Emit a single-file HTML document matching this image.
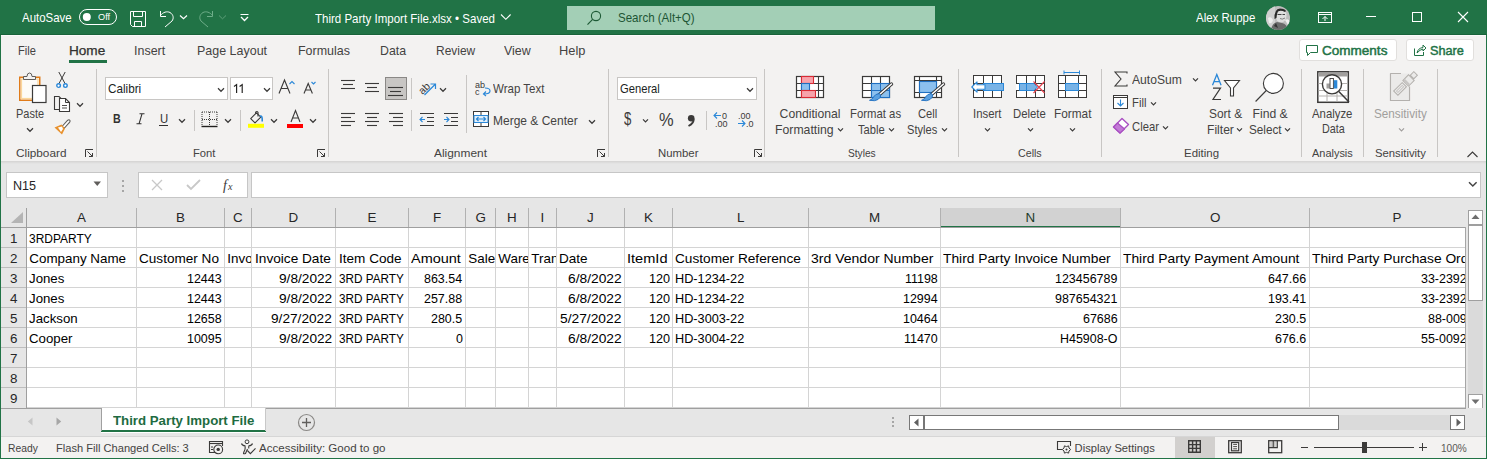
<!DOCTYPE html>
<html><head><meta charset="utf-8"><style>
html,body{margin:0;padding:0;}
body{width:1487px;height:459px;position:relative;overflow:hidden;background:#f3f2f1;font-family:"Liberation Sans",sans-serif;}
.t{position:absolute;white-space:nowrap;transform-origin:0 0;font-family:"Liberation Sans",sans-serif;}
svg{overflow:visible}
</style></head><body>
<div style="position:absolute;left:0px;top:0px;width:1487px;height:35px;background:#217346"></div>
<div style="position:absolute;left:0px;top:34px;width:1487px;height:1px;background:#19633a"></div>
<div style="position:absolute;left:0px;top:35px;width:1487px;height:126px;background:#f3f2f1"></div>
<div style="position:absolute;left:1px;top:35px;width:1485px;height:1px;background:#fbfafa"></div>
<div style="position:absolute;left:0px;top:161px;width:1487px;height:247px;background:#e6e6e6"></div>
<div style="position:absolute;left:0px;top:161px;width:1487px;height:3px;background:linear-gradient(#d4d3d2,#e6e6e6)"></div>
<span class="t" style="left:22.10px;top:11.63px;font-size:12.2px;line-height:12.2px;font-weight:normal;font-style:normal;color:#ffffff;transform:scaleX(0.9396);">AutoSave</span>
<svg style="position:absolute;left:79px;top:9px;" width="38" height="16" viewBox="0 0 38 16"><rect x="0.5" y="0.5" width="37" height="15" rx="7.5" fill="none" stroke="#fff" stroke-width="1"/><circle cx="7.8" cy="8" r="4" fill="#fff"/></svg>
<span class="t" style="left:98.00px;top:12.88px;font-size:9.2px;line-height:9.2px;font-weight:normal;font-style:normal;color:#ffffff;">Off</span>
<svg style="position:absolute;left:129px;top:10px;" width="18" height="18" viewBox="0 0 18 18"><path d="M1.5 1.5 H16.5 V16.5 H3.5 L1.5 14.5 Z" fill="none" stroke="#fff" stroke-width="1"/><path d="M4.5 1.5 V6.5 H13.5 V1.5" fill="none" stroke="#fff"/><path d="M5.5 16.5 V11.5 H12.5 V16.5" fill="none" stroke="#fff"/></svg>
<svg style="position:absolute;left:158px;top:10px;" width="18" height="18" viewBox="0 0 18 18"><path d="M2.5 1 V6.5 H8" fill="none" stroke="#fff" stroke-width="1"/><path d="M2.3 5.8 C5 2 9 1 12 2.5 C15.5 4.5 16 8.5 14 11 L7 17" fill="none" stroke="#fff" stroke-width="1"/></svg>
<svg style="position:absolute;left:179px;top:14px;" width="9" height="6" viewBox="0 0 9 6"><path d="M1 1.5 L4.5 4.8 L8 1.5" fill="none" stroke="#fff" stroke-width="1.2"/></svg>
<svg style="position:absolute;left:197px;top:10px;" width="18" height="18" viewBox="0 0 18 18"><path d="M15.5 1 V6.5 H10" fill="none" stroke="#6fae8a" stroke-width="1"/><path d="M15.7 5.8 C13 2 9 1 6 2.5 C2.5 4.5 2 8.5 4 11 L11 17" fill="none" stroke="#6fae8a" stroke-width="1"/></svg>
<svg style="position:absolute;left:218px;top:14px;" width="9" height="6" viewBox="0 0 9 6"><path d="M1 1.5 L4.5 4.8 L8 1.5" fill="none" stroke="#5d9f79" stroke-width="1"/></svg>
<svg style="position:absolute;left:240px;top:13px;" width="10" height="10" viewBox="0 0 10 10"><path d="M0.5 1.5 H8.5" stroke="#fff" stroke-width="1"/><path d="M1 4 L4.5 7.5 L8 4" fill="none" stroke="#fff" stroke-width="1.3"/></svg>
<span class="t" style="left:314.60px;top:12.63px;font-size:12.2px;line-height:12.2px;font-weight:normal;font-style:normal;color:#ffffff;transform:scaleX(0.9445);">Third Party Import File.xlsx • Saved</span>
<svg style="position:absolute;left:500px;top:13px;" width="12" height="8" viewBox="0 0 12 8"><path d="M1 1.5 L5.8 6.3 L10.6 1.5" fill="none" stroke="#fff" stroke-width="1.1"/></svg>
<div style="position:absolute;left:567px;top:6px;width:368px;height:24px;background:#a3cfb6"></div>
<svg style="position:absolute;left:585px;top:10px;" width="18" height="18" viewBox="0 0 18 18"><circle cx="11" cy="6" r="4.6" fill="none" stroke="#1e5a36" stroke-width="1.1"/><path d="M7.6 9.4 L2.5 14.6" stroke="#1e5a36" stroke-width="1.2"/></svg>
<span class="t" style="left:617.60px;top:11.63px;font-size:12.2px;line-height:12.2px;font-weight:normal;font-style:normal;color:#1d5534;transform:scaleX(0.9469);">Search (Alt+Q)</span>
<span class="t" style="left:1195.50px;top:12.23px;font-size:12.2px;line-height:12.2px;font-weight:normal;font-style:normal;color:#ffffff;transform:scaleX(0.9413);">Alex Ruppe</span>
<div style="position:absolute;left:1266px;top:6px;width:24px;height:24px;border-radius:50%;overflow:hidden">
<svg style="position:absolute;left:0px;top:0px;" width="24" height="24" viewBox="0 0 24 24"><g><rect width="24" height="24" fill="#bdbdbd"/><rect x="0" y="0" width="9" height="24" fill="#d0d0d0"/><ellipse cx="15" cy="9.5" rx="5.5" ry="7" fill="#dedede"/><path d="M8.5 13 Q8 3 14 2.5 Q19 2.5 20 5 L19 6 Q15 4 12 5.5 Q10.5 8 10.5 12 Z" fill="#2a2a2a"/><path d="M11.5 8.5 H15.5 M16.5 8.5 H19" stroke="#444" stroke-width="1"/><path d="M14 12.5 Q16 14 19 12" stroke="#666" stroke-width="0.8" fill="none"/><path d="M5 24 Q6 17 11 16 L16 17 Q21 18 22 24 Z" fill="#6a6a6a"/><path d="M2 12 Q5 10 7 14 Q6 18 3 17 Z" fill="#eeeeee"/><path d="M19 14 Q23 12 24 16 L22 19 Z" fill="#f0f0f0"/><path d="M8 20 L10 17 L12 22 Z" fill="#333"/></g></svg>
</div>
<svg style="position:absolute;left:1317px;top:11px;" width="16" height="12" viewBox="0 0 16 12"><rect x="1.5" y="1.5" width="13" height="10" fill="none" stroke="#fff"/><path d="M1.5 3.5 H14.5" stroke="#fff"/><path d="M8 10 V5.5 M5.5 8 L8 5.5 L10.5 8" fill="none" stroke="#fff"/></svg>
<div style="position:absolute;left:1366px;top:16px;width:10px;height:1px;background:#fff"></div>
<svg style="position:absolute;left:1411px;top:11px;" width="12" height="12" viewBox="0 0 12 12"><rect x="1.5" y="1.5" width="9" height="9" fill="none" stroke="#fff"/></svg>
<svg style="position:absolute;left:1457px;top:11px;" width="12" height="12" viewBox="0 0 12 12"><path d="M1 1 L11 11 M11 1 L1 11" stroke="#fff" stroke-width="1.1"/></svg>
<span class="t" style="left:18.00px;top:44.83px;font-size:12.2px;line-height:12.2px;font-weight:normal;font-style:normal;color:#444342;transform:scaleX(0.9100);">File</span>
<span class="t" style="left:69.00px;top:44.83px;font-size:12.2px;line-height:12.2px;font-weight:normal;font-style:normal;color:#323130;transform:scaleX(1.1152);-webkit-text-stroke:0.25px #323130;">Home</span>
<div style="position:absolute;left:69px;top:60px;width:38px;height:3px;background:#217346"></div>
<span class="t" style="left:134.00px;top:44.83px;font-size:12.2px;line-height:12.2px;font-weight:normal;font-style:normal;color:#444342;transform:scaleX(1.0226);">Insert</span>
<span class="t" style="left:197.20px;top:44.83px;font-size:12.2px;line-height:12.2px;font-weight:normal;font-style:normal;color:#444342;transform:scaleX(1.0232);">Page Layout</span>
<span class="t" style="left:298.30px;top:44.83px;font-size:12.2px;line-height:12.2px;font-weight:normal;font-style:normal;color:#444342;transform:scaleX(1.0235);">Formulas</span>
<span class="t" style="left:380.00px;top:44.83px;font-size:12.2px;line-height:12.2px;font-weight:normal;font-style:normal;color:#444342;transform:scaleX(1.0115);">Data</span>
<span class="t" style="left:436.30px;top:44.83px;font-size:12.2px;line-height:12.2px;font-weight:normal;font-style:normal;color:#444342;transform:scaleX(0.9800);">Review</span>
<span class="t" style="left:504.30px;top:44.83px;font-size:12.2px;line-height:12.2px;font-weight:normal;font-style:normal;color:#444342;transform:scaleX(1.0192);">View</span>
<span class="t" style="left:559.30px;top:44.83px;font-size:12.2px;line-height:12.2px;font-weight:normal;font-style:normal;color:#444342;transform:scaleX(1.0520);">Help</span>
<div style="position:absolute;left:1299px;top:39px;width:98px;height:22px;background:#fff;border:1px solid #e1dfdd;border-radius:3px;box-sizing:border-box"></div>
<svg style="position:absolute;left:1305px;top:44px;" width="14" height="13" viewBox="0 0 14 13"><path d="M1.5 1.5 H12.5 V8.5 H5.5 L2.5 11.5 V8.5 H1.5 Z" fill="none" stroke="#217346" stroke-width="1"/></svg>
<span class="t" style="left:1322.00px;top:45.06px;font-size:12.4px;line-height:12.4px;font-weight:normal;font-style:normal;color:#217346;transform:scaleX(1.0917);-webkit-text-stroke:0.45px #217346;">Comments</span>
<div style="position:absolute;left:1406px;top:39px;width:68px;height:22px;background:#fff;border:1px solid #e1dfdd;border-radius:3px;box-sizing:border-box"></div>
<svg style="position:absolute;left:1413px;top:43px;" width="14" height="14" viewBox="0 0 14 14"><path d="M1.5 5.5 V12.5 H10.5 V9" fill="none" stroke="#217346"/><path d="M4 10 Q5 5 10 4.5 V2 L13 5 L10 8 V6 Q7 6.5 4 10Z" fill="none" stroke="#217346"/></svg>
<span class="t" style="left:1430.00px;top:45.06px;font-size:12.4px;line-height:12.4px;font-weight:normal;font-style:normal;color:#217346;transform:scaleX(1.0242);-webkit-text-stroke:0.45px #217346;">Share</span>
<div style="position:absolute;left:96px;top:69px;width:1px;height:88px;background:#c8c6c4"></div>
<div style="position:absolute;left:328px;top:69px;width:1px;height:88px;background:#c8c6c4"></div>
<div style="position:absolute;left:608px;top:69px;width:1px;height:88px;background:#c8c6c4"></div>
<div style="position:absolute;left:764px;top:69px;width:1px;height:88px;background:#c8c6c4"></div>
<div style="position:absolute;left:958px;top:69px;width:1px;height:88px;background:#c8c6c4"></div>
<div style="position:absolute;left:1101px;top:69px;width:1px;height:88px;background:#c8c6c4"></div>
<div style="position:absolute;left:1301px;top:69px;width:1px;height:88px;background:#c8c6c4"></div>
<div style="position:absolute;left:1363px;top:69px;width:1px;height:88px;background:#c8c6c4"></div>
<div style="position:absolute;left:1437px;top:69px;width:1px;height:88px;background:#c8c6c4"></div>
<div style="position:absolute;left:194px;top:110px;width:1px;height:21px;background:#c8c6c4"></div>
<div style="position:absolute;left:240px;top:110px;width:1px;height:21px;background:#c8c6c4"></div>
<div style="position:absolute;left:411px;top:78px;width:1px;height:21px;background:#c8c6c4"></div>
<div style="position:absolute;left:411px;top:110px;width:1px;height:21px;background:#c8c6c4"></div>
<div style="position:absolute;left:466px;top:75px;width:1px;height:58px;background:#c8c6c4"></div>
<div style="position:absolute;left:706px;top:111px;width:1px;height:19px;background:#c8c6c4"></div>
<svg style="position:absolute;left:18px;top:71px;" width="30" height="33" viewBox="0 0 30 33"><rect x="1.75" y="6.25" width="20" height="23" fill="#fdfbf8" stroke="#e07b1a" stroke-width="1.5"/><rect x="3.5" y="8" width="16.5" height="19.5" fill="none" stroke="#fbd79c" stroke-width="1.2"/><path d="M5.5 8.5 V5.5 H9 Q9 2 11.5 2 Q14 2 14 5.5 H17.5 V8.5 Z" fill="#f3f2f1" stroke="#605e5c"/><rect x="14.5" y="14.5" width="13.5" height="17" fill="#fff" stroke="#3b3a39" stroke-width="1.2"/></svg>
<span class="t" style="left:16.30px;top:107.93px;font-size:12.2px;line-height:12.2px;font-weight:normal;font-style:normal;color:#444342;transform:scaleX(0.9000);">Paste</span>
<svg style="position:absolute;left:25.8px;top:126.7px;" width="8" height="6.4" viewBox="0 0 8 6.4"><path d="M1 1.3 L4.0 4.300000000000001 L7 1.3" fill="none" stroke="#3b3a39" stroke-width="1.2"/></svg>
<svg style="position:absolute;left:56px;top:71px;" width="12" height="18" viewBox="0 0 12 18"><path d="M2.8 1 L9 12.5 M9.2 1 L3 12.5" stroke="#3b3a39" stroke-width="1"/><circle cx="2.6" cy="14.6" r="1.8" fill="#fff" stroke="#2b88d8" stroke-width="1.4"/><circle cx="9.4" cy="14.6" r="1.8" fill="#fff" stroke="#2b88d8" stroke-width="1.4"/></svg>
<svg style="position:absolute;left:53px;top:95px;" width="18" height="18" viewBox="0 0 18 18"><path d="M6.5 14.5 H1.5 V1.5 H6 L8.5 4" fill="none" stroke="#3b3a39" stroke-width="1.1"/><path d="M6.5 3.5 H12.5 L16.5 7.5 V16.5 H6.5 Z" fill="#fff" stroke="#3b3a39" stroke-width="1.1"/><path d="M12.5 3.5 V7.5 H16.5" fill="none" stroke="#3b3a39"/><path d="M9 10.5 H14 M9 13 H14" stroke="#3b3a39" stroke-width="0.9"/></svg>
<svg style="position:absolute;left:76px;top:102px;" width="8" height="6.4" viewBox="0 0 8 6.4"><path d="M1 1.3 L4.0 4.300000000000001 L7 1.3" fill="none" stroke="#3b3a39" stroke-width="1.2"/></svg>
<svg style="position:absolute;left:53px;top:118px;" width="18" height="18" viewBox="0 0 18 18"><path d="M9 8.5 L14.5 2.5 Q16 1 17 2.5 Q17.5 3.5 16 5 L11 10.5 Z" fill="#fff" stroke="#605e5c" stroke-width="1.1"/><path d="M1.5 9.5 L8.5 6.5 L12 10.5 L9 16.5 Z" fill="#e8912d"/><path d="M5 9.5 L9 8.5 L10 11 L8 14 Z" fill="#fff"/></svg>
<span class="t" style="left:15.50px;top:148.40px;font-size:11.3px;line-height:11.3px;font-weight:normal;font-style:normal;color:#444342;transform:scaleX(1.0437);">Clipboard</span>
<svg style="position:absolute;left:85px;top:149px;" width="9" height="9" viewBox="0 0 9 9"><path d="M0.5 8 V0.5 H8" fill="none" stroke="#3b3a39"/><path d="M2.5 2.5 L7.5 7.5 M4 7.5 H7.5 V4" fill="none" stroke="#3b3a39"/></svg>
<div style="position:absolute;left:105px;top:77px;width:123px;height:23px;background:#fff;border:1px solid #c8c6c4;box-sizing:border-box"></div>
<span class="t" style="left:108.40px;top:82.73px;font-size:12.2px;line-height:12.2px;font-weight:normal;font-style:normal;color:#201f1e;transform:scaleX(0.9600);">Calibri</span>
<svg style="position:absolute;left:217px;top:87px;" width="8" height="6.4" viewBox="0 0 8 6.4"><path d="M1 1.3 L4.0 4.300000000000001 L7 1.3" fill="none" stroke="#3b3a39" stroke-width="1.2"/></svg>
<div style="position:absolute;left:230px;top:77px;width:43px;height:23px;background:#fff;border:1px solid #c8c6c4;box-sizing:border-box"></div>
<svg style="position:absolute;left:233px;top:84px;" width="12" height="10" viewBox="0 0 12 10"><path d="M1 2.5 L3.6 0.6 V9 M6.6 2.5 L9.2 0.6 V9" fill="none" stroke="#201f1e" stroke-width="1.15"/></svg>
<svg style="position:absolute;left:262.5px;top:87px;" width="8" height="6.4" viewBox="0 0 8 6.4"><path d="M1 1.3 L4.0 4.300000000000001 L7 1.3" fill="none" stroke="#3b3a39" stroke-width="1.2"/></svg>
<svg style="position:absolute;left:278px;top:79px;" width="18" height="16" viewBox="0 0 18 16"><path d="M1 14.5 L6.5 1 L12 14.5 M3 9.5 H10" fill="none" stroke="#3b3a39" stroke-width="1.1"/><path d="M11.5 5 L14 2.5 L16.5 5" fill="none" stroke="#2b88d8" stroke-width="1.1"/></svg>
<svg style="position:absolute;left:303px;top:81px;" width="14" height="14" viewBox="0 0 14 14"><path d="M1 12.5 L5.2 2.5 L9.4 12.5 M2.6 9 H7.8" fill="none" stroke="#3b3a39" stroke-width="1.1"/><path d="M8.5 1 L10.5 3 L12.5 1" fill="none" stroke="#2b88d8" stroke-width="1.1"/></svg>
<span class="t" style="left:112.50px;top:113.38px;font-size:12.5px;line-height:12.5px;font-weight:bold;font-style:normal;color:#323130;transform:scaleX(0.8556);">B</span>
<svg style="position:absolute;left:136px;top:113px;" width="9" height="12" viewBox="0 0 9 12"><path d="M3.5 0.8 H8.5 M0.5 10.8 H5.5 M6 0.8 L3 10.8" fill="none" stroke="#323130" stroke-width="1.1"/></svg>
<span class="t" style="left:159.50px;top:113.30px;font-size:12px;line-height:12px;font-weight:normal;font-style:normal;color:#323130;transform:scaleX(0.9444);">U</span>
<div style="position:absolute;left:159px;top:125px;width:9px;height:1px;background:#323130"></div>
<svg style="position:absolute;left:177.6px;top:118px;" width="8" height="6.4" viewBox="0 0 8 6.4"><path d="M1 1.3 L4.0 4.300000000000001 L7 1.3" fill="none" stroke="#3b3a39" stroke-width="1.2"/></svg>
<svg style="position:absolute;left:201px;top:111px;" width="17" height="17" viewBox="0 0 17 17"><path d="M1 1 H16 M1 8.5 H16 M1 1 V15 M8.5 1 V15 M16 1 V15" fill="none" stroke="#3b3a39" stroke-width="1" stroke-dasharray="1 1"/><path d="M0.5 15.5 H16.5" stroke="#201f1e" stroke-width="1.4"/></svg>
<svg style="position:absolute;left:223.6px;top:118px;" width="8" height="6.4" viewBox="0 0 8 6.4"><path d="M1 1.3 L4.0 4.300000000000001 L7 1.3" fill="none" stroke="#3b3a39" stroke-width="1.2"/></svg>
<svg style="position:absolute;left:247px;top:106px;" width="18" height="23" viewBox="0 0 18 23"><path d="M3.7 12.6 L8 16.9 L13.8 11.1 L9.5 6.8 Z" fill="none" stroke="#3b3a39" stroke-width="1.1" stroke-linejoin="round"/><path d="M8.6 7.8 V6.2 Q10 4.8 11 6.2 V10.5" fill="none" stroke="#3b3a39" stroke-width="1.1"/><path d="M12.8 10.2 Q15.6 9 15.2 15.5" fill="none" stroke="#2b88d8" stroke-width="1.6"/><rect x="1" y="17.8" width="16" height="4" fill="#ffff00"/></svg>
<svg style="position:absolute;left:269.8px;top:118px;" width="8" height="6.4" viewBox="0 0 8 6.4"><path d="M1 1.3 L4.0 4.300000000000001 L7 1.3" fill="none" stroke="#3b3a39" stroke-width="1.2"/></svg>
<svg style="position:absolute;left:286px;top:108px;" width="18" height="21" viewBox="0 0 18 21"><path d="M5 14 L9.5 2.5 L14 14 M6.5 10 H12.5" fill="none" stroke="#3b3a39" stroke-width="1.1"/><rect x="1" y="16" width="16" height="4" fill="#ff0000"/></svg>
<svg style="position:absolute;left:308.6px;top:118px;" width="8" height="6.4" viewBox="0 0 8 6.4"><path d="M1 1.3 L4.0 4.300000000000001 L7 1.3" fill="none" stroke="#3b3a39" stroke-width="1.2"/></svg>
<span class="t" style="left:193.00px;top:147.90px;font-size:11.3px;line-height:11.3px;font-weight:normal;font-style:normal;color:#444342;transform:scaleX(0.9913);">Font</span>
<svg style="position:absolute;left:317px;top:149px;" width="9" height="9" viewBox="0 0 9 9"><path d="M0.5 8 V0.5 H8" fill="none" stroke="#3b3a39"/><path d="M2.5 2.5 L7.5 7.5 M4 7.5 H7.5 V4" fill="none" stroke="#3b3a39"/></svg>
<svg style="position:absolute;left:340px;top:0px;" width="20" height="160" viewBox="0 0 20 160"><path d="M1 80.5 H15" stroke="#3b3a39" stroke-width="1.1"/><path d="M3 84.5 H13" stroke="#3b3a39" stroke-width="1.1"/><path d="M1 88.5 H15" stroke="#3b3a39" stroke-width="1.1"/></svg>
<svg style="position:absolute;left:364px;top:0px;" width="20" height="160" viewBox="0 0 20 160"><path d="M1 83.5 H15" stroke="#3b3a39" stroke-width="1.1"/><path d="M3 87.5 H13" stroke="#3b3a39" stroke-width="1.1"/><path d="M1 91.5 H15" stroke="#3b3a39" stroke-width="1.1"/></svg>
<div style="position:absolute;left:385px;top:77px;width:22px;height:23px;background:#c8c6c4;border:1px solid #8a8886;box-sizing:border-box"></div>
<svg style="position:absolute;left:387px;top:0px;" width="20" height="160" viewBox="0 0 20 160"><path d="M1 87.5 H16" stroke="#3b3a39" stroke-width="1.1"/><path d="M3 91.5 H14" stroke="#3b3a39" stroke-width="1.1"/><path d="M1 95.5 H16" stroke="#3b3a39" stroke-width="1.1"/></svg>
<svg style="position:absolute;left:340px;top:0px;" width="20" height="160" viewBox="0 0 20 160"><path d="M1 113.5 H15" stroke="#3b3a39" stroke-width="1.1"/><path d="M1 117.5 H11" stroke="#3b3a39" stroke-width="1.1"/><path d="M1 121.5 H15" stroke="#3b3a39" stroke-width="1.1"/><path d="M1 125.5 H11" stroke="#3b3a39" stroke-width="1.1"/></svg>
<svg style="position:absolute;left:364px;top:0px;" width="20" height="160" viewBox="0 0 20 160"><path d="M1 113.5 H15" stroke="#3b3a39" stroke-width="1.1"/><path d="M3 117.5 H13" stroke="#3b3a39" stroke-width="1.1"/><path d="M1 121.5 H15" stroke="#3b3a39" stroke-width="1.1"/><path d="M3 125.5 H13" stroke="#3b3a39" stroke-width="1.1"/></svg>
<svg style="position:absolute;left:388px;top:0px;" width="20" height="160" viewBox="0 0 20 160"><path d="M1 113.5 H15" stroke="#3b3a39" stroke-width="1.1"/><path d="M5 117.5 H15" stroke="#3b3a39" stroke-width="1.1"/><path d="M1 121.5 H15" stroke="#3b3a39" stroke-width="1.1"/><path d="M5 125.5 H15" stroke="#3b3a39" stroke-width="1.1"/></svg>
<svg style="position:absolute;left:417px;top:78px;" width="22" height="20" viewBox="0 0 22 20"><text x="1" y="14" font-family="Liberation Sans" font-size="10.5" fill="#3b3a39" transform="rotate(-45 7 10)">ab</text><path d="M7.5 17 L18 6.5 M13.5 6 H18.5 V11" fill="none" stroke="#2b88d8" stroke-width="1.2"/></svg>
<svg style="position:absolute;left:438.8px;top:87px;" width="8" height="6.4" viewBox="0 0 8 6.4"><path d="M1 1.3 L4.0 4.300000000000001 L7 1.3" fill="none" stroke="#3b3a39" stroke-width="1.2"/></svg>
<svg style="position:absolute;left:419px;top:112px;" width="16" height="15" viewBox="0 0 16 15"><path d="M1 7.5 H6 M3.5 5 L1 7.5 L3.5 10" fill="none" stroke="#2b88d8" stroke-width="1.1"/><path d="M1 1.5 H15 M8 5.5 H15 M8 9.5 H15 M1 13.5 H15" stroke="#3b3a39" stroke-width="1.1"/></svg>
<svg style="position:absolute;left:443px;top:112px;" width="16" height="15" viewBox="0 0 16 15"><path d="M1 7.5 H6 M3.5 5 L6 7.5 L3.5 10" fill="none" stroke="#2b88d8" stroke-width="1.1"/><path d="M1 1.5 H15 M8 5.5 H15 M8 9.5 H15 M1 13.5 H15" stroke="#3b3a39" stroke-width="1.1"/></svg>
<svg style="position:absolute;left:475px;top:80px;" width="17" height="17" viewBox="0 0 17 17"><text x="0" y="8" font-family="Liberation Sans" font-size="9" fill="#3b3a39">ab</text><text x="0" y="15" font-family="Liberation Sans" font-size="9" fill="#3b3a39">c</text><path d="M10 8 Q15 8 15 11 Q15 14 9 14 M11 11.5 L8.5 14 L11 16" fill="none" stroke="#2b88d8" stroke-width="1.2"/></svg>
<span class="t" style="left:493.00px;top:82.83px;font-size:12.2px;line-height:12.2px;font-weight:normal;font-style:normal;color:#444342;transform:scaleX(0.9455);">Wrap Text</span>
<svg style="position:absolute;left:473px;top:111px;" width="17" height="17" viewBox="0 0 17 17"><rect x="0.5" y="0.5" width="15" height="15" fill="#fff" stroke="#3b3a39"/><path d="M8 0.5 V4.5 M8 11.5 V15.5" stroke="#3b3a39"/><rect x="1" y="4.5" width="14" height="7" fill="#e1effa" stroke="#2b88d8"/><path d="M3.5 8 H12.5 M5.5 6 L3.5 8 L5.5 10 M10.5 6 L12.5 8 L10.5 10" fill="none" stroke="#2b88d8" stroke-width="1.2"/></svg>
<span class="t" style="left:493.00px;top:114.93px;font-size:12.2px;line-height:12.2px;font-weight:normal;font-style:normal;color:#444342;transform:scaleX(0.9837);">Merge &amp; Center</span>
<svg style="position:absolute;left:587.5px;top:119px;" width="8" height="6.4" viewBox="0 0 8 6.4"><path d="M1 1.3 L4.0 4.300000000000001 L7 1.3" fill="none" stroke="#3b3a39" stroke-width="1.2"/></svg>
<span class="t" style="left:434.30px;top:148.40px;font-size:11.3px;line-height:11.3px;font-weight:normal;font-style:normal;color:#444342;transform:scaleX(1.0540);">Alignment</span>
<svg style="position:absolute;left:597px;top:149px;" width="9" height="9" viewBox="0 0 9 9"><path d="M0.5 8 V0.5 H8" fill="none" stroke="#3b3a39"/><path d="M2.5 2.5 L7.5 7.5 M4 7.5 H7.5 V4" fill="none" stroke="#3b3a39"/></svg>
<div style="position:absolute;left:617px;top:77px;width:140px;height:23px;background:#fff;border:1px solid #c8c6c4;box-sizing:border-box"></div>
<span class="t" style="left:620.00px;top:82.73px;font-size:12.2px;line-height:12.2px;font-weight:normal;font-style:normal;color:#201f1e;transform:scaleX(0.9186);">General</span>
<svg style="position:absolute;left:746px;top:87px;" width="8" height="6.4" viewBox="0 0 8 6.4"><path d="M1 1.3 L4.0 4.300000000000001 L7 1.3" fill="none" stroke="#3b3a39" stroke-width="1.2"/></svg>
<span class="t" style="left:623.60px;top:110.62px;font-size:17.5px;line-height:17.5px;font-weight:normal;font-style:normal;color:#3b3a39;transform:scaleX(0.7500);">$</span>
<svg style="position:absolute;left:642px;top:118px;" width="7" height="6" viewBox="0 0 7 6"><path d="M1 1.3 L3.5 3.9 L6 1.3" fill="none" stroke="#3b3a39" stroke-width="1.2"/></svg>
<span class="t" style="left:659.40px;top:110.98px;font-size:18.5px;line-height:18.5px;font-weight:normal;font-style:normal;color:#3b3a39;transform:scaleX(0.8882);">%</span>
<svg style="position:absolute;left:686px;top:112px;" width="10" height="16" viewBox="0 0 10 16"><circle cx="5.2" cy="6.2" r="3.3" fill="#3b3a39"/><path d="M7.6 6.8 Q8.2 11 2.5 14" fill="none" stroke="#3b3a39" stroke-width="1.9"/></svg>
<svg style="position:absolute;left:713px;top:109px;" width="18" height="20" viewBox="0 0 18 20"><path d="M1 6.5 H8 M4 3.5 L1 6.5 L4 9.5" fill="none" stroke="#2b88d8" stroke-width="1.1"/><text x="9" y="10" font-family="Liberation Sans" font-size="9" fill="#3b3a39">0</text><text x="2" y="18" font-family="Liberation Sans" font-size="9" fill="#3b3a39">.00</text></svg>
<svg style="position:absolute;left:737px;top:109px;" width="18" height="20" viewBox="0 0 18 20"><text x="1" y="10" font-family="Liberation Sans" font-size="9" fill="#3b3a39">.00</text><path d="M1 14.5 H8 M5 11.5 L8 14.5 L5 17.5" fill="none" stroke="#2b88d8" stroke-width="1.1"/><text x="9" y="18" font-family="Liberation Sans" font-size="9" fill="#3b3a39">.0</text></svg>
<span class="t" style="left:658.40px;top:148.40px;font-size:11.3px;line-height:11.3px;font-weight:normal;font-style:normal;color:#444342;transform:scaleX(1.0075);">Number</span>
<svg style="position:absolute;left:754px;top:149px;" width="9" height="9" viewBox="0 0 9 9"><path d="M0.5 8 V0.5 H8" fill="none" stroke="#3b3a39"/><path d="M2.5 2.5 L7.5 7.5 M4 7.5 H7.5 V4" fill="none" stroke="#3b3a39"/></svg>
<svg style="position:absolute;left:795px;top:75px;" width="30" height="24" viewBox="0 0 30 24"><rect x="1.5" y="1.5" width="27" height="21" fill="#fff" stroke="#3b3a39" stroke-width="1.2"/><path d="M1.5 8.5 H28.5 M1.5 15.5 H28.5 M6.5 1.5 V22.5 M23.5 1.5 V22.5" stroke="#3b3a39" stroke-width="1.1"/><rect x="6.5" y="1.5" width="12" height="7" fill="#f7a3ab" stroke="#d92b35" stroke-width="1.1"/><rect x="6.5" y="8.5" width="8" height="7" fill="#8cc0ee" stroke="#1f6fc1" stroke-width="1.1"/><rect x="6.5" y="15.5" width="14" height="7" fill="#f7a3ab" stroke="#d92b35" stroke-width="1.1"/></svg>
<svg style="position:absolute;left:861px;top:75px;" width="34" height="28" viewBox="0 0 34 28"><rect x="1.5" y="1.5" width="27" height="21" fill="#fff" stroke="#3b3a39" stroke-width="1.2"/><path d="M1.5 8.5 H28.5 M1.5 15.5 H28.5 M10.5 1.5 V22.5 M19.5 1.5 V22.5" stroke="#3b3a39" stroke-width="1.1"/><rect x="10.5" y="8.5" width="18" height="14" fill="#8cc0ee" stroke="#1f6fc1" stroke-width="1.1"/><path d="M10.5 15.5 H28.5 M19.5 8.5 V22.5" stroke="#1f6fc1" stroke-width="1"/><path d="M30.5 9 L18.5 19.5" stroke="#3b3a39" stroke-width="3.4" stroke-linecap="round"/><path d="M30.5 9 L18.5 19.5" stroke="#fff" stroke-width="1.5" stroke-linecap="round"/><path d="M18.5 18.5 Q14 19 12.5 22 Q11.5 24.5 8.5 25.3 Q14 26.5 17 24.5 Q20 22.5 19.5 20 Z" fill="#5aa0e0" stroke="#1f6fc1" stroke-width="0.9"/></svg>
<svg style="position:absolute;left:913px;top:75px;" width="34" height="28" viewBox="0 0 34 28"><rect x="1.5" y="1.5" width="27" height="21" fill="#fff" stroke="#3b3a39" stroke-width="1.2"/><path d="M1.5 5.5 H28.5 M1.5 17.5 H28.5 M6.5 1.5 V22.5 M23.5 1.5 V22.5" stroke="#3b3a39" stroke-width="1.1"/><rect x="6.5" y="6.5" width="17" height="11" fill="#8cc0ee" stroke="#1f6fc1" stroke-width="1.1"/><path d="M30.5 9 L18.5 19.5" stroke="#3b3a39" stroke-width="3.4" stroke-linecap="round"/><path d="M30.5 9 L18.5 19.5" stroke="#fff" stroke-width="1.5" stroke-linecap="round"/><path d="M18.5 18.5 Q14 19 12.5 22 Q11.5 24.5 8.5 25.3 Q14 26.5 17 24.5 Q20 22.5 19.5 20 Z" fill="#5aa0e0" stroke="#1f6fc1" stroke-width="0.9"/></svg>
<span class="t" style="left:779.60px;top:107.93px;font-size:12.2px;line-height:12.2px;font-weight:normal;font-style:normal;color:#444342;">Conditional</span>
<span class="t" style="left:775.30px;top:124.13px;font-size:12.2px;line-height:12.2px;font-weight:normal;font-style:normal;color:#444342;transform:scaleX(1.0052);">Formatting</span>
<svg style="position:absolute;left:837.4px;top:127px;" width="7" height="6" viewBox="0 0 7 6"><path d="M1 1.3 L3.5 3.9 L6 1.3" fill="none" stroke="#3b3a39" stroke-width="1.2"/></svg>
<span class="t" style="left:850.40px;top:107.93px;font-size:12.2px;line-height:12.2px;font-weight:normal;font-style:normal;color:#444342;transform:scaleX(0.9309);">Format as</span>
<span class="t" style="left:857.60px;top:124.13px;font-size:12.2px;line-height:12.2px;font-weight:normal;font-style:normal;color:#444342;transform:scaleX(0.9172);">Table</span>
<svg style="position:absolute;left:887.5px;top:127px;" width="7" height="6" viewBox="0 0 7 6"><path d="M1 1.3 L3.5 3.9 L6 1.3" fill="none" stroke="#3b3a39" stroke-width="1.2"/></svg>
<span class="t" style="left:918.40px;top:107.93px;font-size:12.2px;line-height:12.2px;font-weight:normal;font-style:normal;color:#444342;transform:scaleX(0.9143);">Cell</span>
<span class="t" style="left:907.00px;top:124.13px;font-size:12.2px;line-height:12.2px;font-weight:normal;font-style:normal;color:#444342;transform:scaleX(0.9091);">Styles</span>
<svg style="position:absolute;left:941px;top:127px;" width="7" height="6" viewBox="0 0 7 6"><path d="M1 1.3 L3.5 3.9 L6 1.3" fill="none" stroke="#3b3a39" stroke-width="1.2"/></svg>
<span class="t" style="left:847.60px;top:148.40px;font-size:11.3px;line-height:11.3px;font-weight:normal;font-style:normal;color:#444342;transform:scaleX(0.9000);">Styles</span>
<svg style="position:absolute;left:971px;top:75px;" width="34" height="25" viewBox="0 0 34 25"><rect x="2.5" y="0.5" width="28" height="22" fill="#fff" stroke="#3b3a39"/><path d="M2.5 8.5 H30.5 M2.5 15.5 H30.5 M12.5 0.5 V22.5 M21.5 0.5 V22.5" stroke="#3b3a39"/><rect x="12.5" y="8.5" width="20" height="7" fill="#79b3e6" stroke="#2b88d8"/><path d="M0.8 12 L6 6.8 V9.8 H14 V14.2 H6 V17.2 Z" fill="#fff" stroke="#2b88d8" stroke-width="1.1" stroke-linejoin="round"/></svg>
<svg style="position:absolute;left:1015px;top:75px;" width="32" height="25" viewBox="0 0 32 25"><rect x="1.5" y="0.5" width="28" height="22" fill="#fff" stroke="#3b3a39"/><path d="M1.5 8.5 H29.5 M1.5 15.5 H29.5 M11.5 0.5 V22.5 M20.5 0.5 V22.5" stroke="#3b3a39"/><rect x="1" y="9" width="3" height="6" fill="#fff"/><path d="M4.5 8.5 H19 L22.5 12 L19 15.5 H4.5 Z" fill="#79b3e6" stroke="#2b88d8"/><path d="M11.5 8.5 V15.5" stroke="#2b88d8"/><path d="M18.5 6.5 L29.5 18 M29.5 6.5 L18.5 18" stroke="#e8404c" stroke-width="1.1"/></svg>
<svg style="position:absolute;left:1058px;top:70px;" width="30" height="30" viewBox="0 0 30 30"><path d="M6 2.5 H21.5 M6 0.5 V4.5 M21.5 0.5 V4.5" stroke="#2b88d8" stroke-width="1"/><rect x="0.5" y="5.5" width="28" height="22" fill="#fff" stroke="#3b3a39"/><path d="M0.5 13.5 H28.5 M0.5 20.5 H28.5 M7.5 5.5 V27.5 M20.5 5.5 V27.5" stroke="#3b3a39"/><rect x="7.5" y="13.5" width="13" height="7" fill="#79b3e6" stroke="#2b88d8"/></svg>
<span class="t" style="left:973.00px;top:107.93px;font-size:12.2px;line-height:12.2px;font-weight:normal;font-style:normal;color:#444342;transform:scaleX(0.9323);">Insert</span>
<svg style="position:absolute;left:984px;top:127px;" width="7" height="6" viewBox="0 0 7 6"><path d="M1 1.3 L3.5 3.9 L6 1.3" fill="none" stroke="#3b3a39" stroke-width="1.2"/></svg>
<span class="t" style="left:1013.40px;top:107.93px;font-size:12.2px;line-height:12.2px;font-weight:normal;font-style:normal;color:#444342;transform:scaleX(0.9314);">Delete</span>
<svg style="position:absolute;left:1026.5px;top:127px;" width="7" height="6" viewBox="0 0 7 6"><path d="M1 1.3 L3.5 3.9 L6 1.3" fill="none" stroke="#3b3a39" stroke-width="1.2"/></svg>
<span class="t" style="left:1053.50px;top:107.93px;font-size:12.2px;line-height:12.2px;font-weight:normal;font-style:normal;color:#444342;transform:scaleX(0.9692);">Format</span>
<svg style="position:absolute;left:1068.5px;top:127px;" width="7" height="6" viewBox="0 0 7 6"><path d="M1 1.3 L3.5 3.9 L6 1.3" fill="none" stroke="#3b3a39" stroke-width="1.2"/></svg>
<span class="t" style="left:1018.20px;top:148.40px;font-size:11.3px;line-height:11.3px;font-weight:normal;font-style:normal;color:#444342;transform:scaleX(0.9440);">Cells</span>
<svg style="position:absolute;left:1114px;top:71px;" width="15" height="16" viewBox="0 0 15 16"><path d="M13 2.5 V1 H1 L7 8 L1 15 H13 V13.5" fill="none" stroke="#3b3a39" stroke-width="1.1"/></svg>
<span class="t" style="left:1132.00px;top:73.53px;font-size:12.2px;line-height:12.2px;font-weight:normal;font-style:normal;color:#444342;transform:scaleX(0.9940);">AutoSum</span>
<svg style="position:absolute;left:1191.6px;top:77px;" width="7" height="6" viewBox="0 0 7 6"><path d="M1 1.3 L3.5 3.9 L6 1.3" fill="none" stroke="#3b3a39" stroke-width="1.2"/></svg>
<svg style="position:absolute;left:1112px;top:94px;" width="17" height="16" viewBox="0 0 17 16"><rect x="1.5" y="1.5" width="14" height="13" fill="#fff" stroke="#3b3a39"/><path d="M1.5 3.5 H15.5" stroke="#3b3a39"/><path d="M8.5 5.5 V12 M5.5 9 L8.5 12 L11.5 9" fill="none" stroke="#2b88d8" stroke-width="1.1"/></svg>
<span class="t" style="left:1132.00px;top:96.63px;font-size:12.2px;line-height:12.2px;font-weight:normal;font-style:normal;color:#444342;transform:scaleX(0.9250);">Fill</span>
<svg style="position:absolute;left:1150px;top:101px;" width="7" height="6" viewBox="0 0 7 6"><path d="M1 1.3 L3.5 3.9 L6 1.3" fill="none" stroke="#3b3a39" stroke-width="1.2"/></svg>
<svg style="position:absolute;left:1112px;top:116px;" width="18" height="18" viewBox="0 0 18 18"><path d="M1.5 11 L10 2.5 L16.5 8.5 L8 17 Z" fill="#fff" stroke="#a94fc2" stroke-width="1.4" stroke-linejoin="round"/><path d="M1.5 11 L5.5 7 L12.5 13 L8 17 Z" fill="#c27ad6" stroke="#a94fc2" stroke-width="1.2" stroke-linejoin="round"/></svg>
<span class="t" style="left:1132.00px;top:120.63px;font-size:12.2px;line-height:12.2px;font-weight:normal;font-style:normal;color:#444342;transform:scaleX(0.9241);">Clear</span>
<svg style="position:absolute;left:1162px;top:124.5px;" width="7" height="6" viewBox="0 0 7 6"><path d="M1 1.3 L3.5 3.9 L6 1.3" fill="none" stroke="#3b3a39" stroke-width="1.2"/></svg>
<svg style="position:absolute;left:1210px;top:72px;" width="32" height="31" viewBox="0 0 32 31"><path d="M2.5 13.2 L6.8 2.6 L11.1 13.2 M4 9.6 H9.6" fill="none" stroke="#2b88d8" stroke-width="1.3"/><path d="M3 16.2 H10.5 L3 27.5 H11" fill="none" stroke="#3b3a39" stroke-width="1.2"/><path d="M14.5 8.5 H29.5 L23.5 16 V24 H20.5 V16 Z" fill="#fff" stroke="#3b3a39" stroke-width="1.1"/></svg>
<svg style="position:absolute;left:1254px;top:72px;" width="32" height="31" viewBox="0 0 32 31"><circle cx="19.4" cy="11.4" r="10" fill="#fff" stroke="#3b3a39" stroke-width="1.1"/><path d="M12.3 18.5 L1.6 29.5" stroke="#3b3a39" stroke-width="1.1"/></svg>
<span class="t" style="left:1209.40px;top:107.93px;font-size:12.2px;line-height:12.2px;font-weight:normal;font-style:normal;color:#444342;transform:scaleX(0.9794);">Sort &amp;</span>
<span class="t" style="left:1207.20px;top:124.13px;font-size:12.2px;line-height:12.2px;font-weight:normal;font-style:normal;color:#444342;transform:scaleX(0.9926);">Filter</span>
<svg style="position:absolute;left:1236px;top:127px;" width="7" height="6" viewBox="0 0 7 6"><path d="M1 1.3 L3.5 3.9 L6 1.3" fill="none" stroke="#3b3a39" stroke-width="1.2"/></svg>
<span class="t" style="left:1252.50px;top:107.93px;font-size:12.2px;line-height:12.2px;font-weight:normal;font-style:normal;color:#444342;">Find &amp;</span>
<span class="t" style="left:1249.20px;top:124.13px;font-size:12.2px;line-height:12.2px;font-weight:normal;font-style:normal;color:#444342;transform:scaleX(0.9618);">Select</span>
<svg style="position:absolute;left:1283.5px;top:127px;" width="7" height="6" viewBox="0 0 7 6"><path d="M1 1.3 L3.5 3.9 L6 1.3" fill="none" stroke="#3b3a39" stroke-width="1.2"/></svg>
<span class="t" style="left:1183.90px;top:148.40px;font-size:11.3px;line-height:11.3px;font-weight:normal;font-style:normal;color:#444342;transform:scaleX(1.0143);">Editing</span>
<svg style="position:absolute;left:1316px;top:70px;" width="35" height="34" viewBox="0 0 35 34"><rect x="1.8" y="1.8" width="30.5" height="30.5" fill="#fff" stroke="#3b3a39" stroke-width="1.5"/><rect x="2.5" y="2.5" width="29" height="4" fill="#a19f9d"/><path d="M2.5 13.5 H31.5 M2.5 20.5 H31.5 M2.5 26 H31.5 M11 6.5 V31.5 M21 6.5 V31.5" stroke="#b3b0ad" stroke-width="1"/><circle cx="16" cy="14.3" r="9.6" fill="#fff" stroke="#3b3a39" stroke-width="1.4"/><rect x="10.5" y="13.5" width="3.2" height="5" fill="#a19f9d"/><rect x="14" y="8.5" width="3.4" height="10" fill="#fff" stroke="#3b3a39" stroke-width="0.9"/><rect x="17.8" y="10.2" width="3.5" height="8.3" fill="#2b88d8"/><path d="M22.8 21.5 L33 32" stroke="#3b3a39" stroke-width="1.5"/></svg>
<span class="t" style="left:1312.40px;top:107.93px;font-size:12.2px;line-height:12.2px;font-weight:normal;font-style:normal;color:#444342;transform:scaleX(0.9318);">Analyze</span>
<span class="t" style="left:1321.60px;top:123.23px;font-size:12.2px;line-height:12.2px;font-weight:normal;font-style:normal;color:#444342;transform:scaleX(0.8846);">Data</span>
<span class="t" style="left:1312.00px;top:148.40px;font-size:11.3px;line-height:11.3px;font-weight:normal;font-style:normal;color:#444342;transform:scaleX(0.9690);">Analysis</span>
<svg style="position:absolute;left:1389px;top:70px;" width="32" height="33" viewBox="0 0 32 33"><path d="M1.5 3.5 H12 M20.5 16 V30.5 H1.5 V3.5" fill="#ebeae9" stroke="#b3b0ad" stroke-width="1.1"/><rect x="1.5" y="3.5" width="19" height="27" fill="#ebeae9"/><path d="M1.5 3.5 H12 M20.5 17 V30.5 H1.5 V3.5" fill="none" stroke="#b3b0ad" stroke-width="1.1"/><g transform="rotate(-45 16 14)"><rect x="3" y="11" width="12" height="6" fill="#ebeae9" stroke="#b3b0ad" stroke-width="1"/><rect x="5" y="13" width="8" height="2" fill="none" stroke="#b3b0ad" stroke-width="0.8"/><rect x="17" y="10" width="8" height="8" fill="#ebeae9" stroke="#b3b0ad" stroke-width="1"/><rect x="17.5" y="10.5" width="2" height="7" fill="#c8c6c4"/><rect x="26" y="11.5" width="5" height="5" fill="#ebeae9" stroke="#b3b0ad" stroke-width="1"/></g></svg>
<span class="t" style="left:1373.90px;top:107.93px;font-size:12.2px;line-height:12.2px;font-weight:normal;font-style:normal;color:#a19f9d;transform:scaleX(0.9618);">Sensitivity</span>
<svg style="position:absolute;left:1398px;top:127px;" width="7" height="6" viewBox="0 0 7 6"><path d="M1 1.3 L3.5 3.9 L6 1.3" fill="none" stroke="#a19f9d" stroke-width="1.2"/></svg>
<span class="t" style="left:1375.00px;top:148.40px;font-size:11.3px;line-height:11.3px;font-weight:normal;font-style:normal;color:#444342;">Sensitivity</span>
<svg style="position:absolute;left:1466px;top:150px;" width="13" height="9" viewBox="0 0 13 9"><path d="M1.5 7 L6.5 2 L11.5 7" fill="none" stroke="#3b3a39" stroke-width="1.1"/></svg>
<div style="position:absolute;left:6px;top:172px;width:102px;height:26px;background:#fff;border:1px solid #c6c6c6;box-sizing:border-box"></div>
<span class="t" style="left:13.20px;top:178.71px;font-size:13.4px;line-height:13.4px;font-weight:normal;font-style:normal;color:#262626;transform:scaleX(0.9400);">N15</span>
<svg style="position:absolute;left:93px;top:181px;" width="9" height="6" viewBox="0 0 9 6"><path d="M0.5 0.5 H8 L4.25 5 Z" fill="#605e5c"/></svg>
<div style="position:absolute;left:122px;top:180px;width:2px;height:2px;background:#a6a6a6"></div>
<div style="position:absolute;left:122px;top:185px;width:2px;height:2px;background:#a6a6a6"></div>
<div style="position:absolute;left:122px;top:190px;width:2px;height:2px;background:#a6a6a6"></div>
<div style="position:absolute;left:138px;top:172px;width:110px;height:26px;background:#fff;border:1px solid #c6c6c6;box-sizing:border-box"></div>
<svg style="position:absolute;left:151px;top:179px;" width="12" height="12" viewBox="0 0 12 12"><path d="M1 1 L11 11 M11 1 L1 11" stroke="#c8c8c8" stroke-width="1.3"/></svg>
<svg style="position:absolute;left:186px;top:179px;" width="15" height="12" viewBox="0 0 15 12"><path d="M1 6 L5 10 L14 1" fill="none" stroke="#c8c8c8" stroke-width="1.8"/></svg>
<svg style="position:absolute;left:222px;top:179px;" width="15" height="14" viewBox="0 0 15 14"><text x="1" y="10.5" font-family="Liberation Serif" font-style="italic" font-size="14" fill="#3b3a39">f</text><text x="6" y="11" font-family="Liberation Serif" font-style="italic" font-size="10" fill="#3b3a39">x</text></svg>
<div style="position:absolute;left:251px;top:172px;width:1230px;height:26px;background:#fff;border:1px solid #c6c6c6;box-sizing:border-box"></div>
<svg style="position:absolute;left:1468px;top:181px;" width="10" height="7" viewBox="0 0 10 7"><path d="M1 1.2 L4.8 5 L8.6 1.2" fill="none" stroke="#444" stroke-width="1.5"/></svg>
<div style="position:absolute;left:27px;top:228px;width:1438px;height:180px;background:#fff"></div>
<div style="position:absolute;left:941px;top:208px;width:179px;height:19px;background:#d2d2d2"></div>
<div style="position:absolute;left:941px;top:226px;width:179px;height:2px;background:#217346"></div>
<div style="position:absolute;left:136px;top:228px;width:1px;height:180px;background:#d4d4d4"></div>
<div style="position:absolute;left:224px;top:228px;width:1px;height:180px;background:#d4d4d4"></div>
<div style="position:absolute;left:251px;top:228px;width:1px;height:180px;background:#d4d4d4"></div>
<div style="position:absolute;left:335px;top:228px;width:1px;height:180px;background:#d4d4d4"></div>
<div style="position:absolute;left:408px;top:228px;width:1px;height:180px;background:#d4d4d4"></div>
<div style="position:absolute;left:465px;top:228px;width:1px;height:180px;background:#d4d4d4"></div>
<div style="position:absolute;left:495px;top:228px;width:1px;height:180px;background:#d4d4d4"></div>
<div style="position:absolute;left:528px;top:228px;width:1px;height:180px;background:#d4d4d4"></div>
<div style="position:absolute;left:556px;top:228px;width:1px;height:180px;background:#d4d4d4"></div>
<div style="position:absolute;left:624px;top:228px;width:1px;height:180px;background:#d4d4d4"></div>
<div style="position:absolute;left:672px;top:228px;width:1px;height:180px;background:#d4d4d4"></div>
<div style="position:absolute;left:808px;top:228px;width:1px;height:180px;background:#d4d4d4"></div>
<div style="position:absolute;left:940px;top:228px;width:1px;height:180px;background:#d4d4d4"></div>
<div style="position:absolute;left:1120px;top:228px;width:1px;height:180px;background:#d4d4d4"></div>
<div style="position:absolute;left:1309px;top:228px;width:1px;height:180px;background:#d4d4d4"></div>
<div style="position:absolute;left:27px;top:247px;width:1438px;height:1px;background:#d4d4d4"></div>
<div style="position:absolute;left:27px;top:267px;width:1438px;height:1px;background:#d4d4d4"></div>
<div style="position:absolute;left:27px;top:287px;width:1438px;height:1px;background:#d4d4d4"></div>
<div style="position:absolute;left:27px;top:307px;width:1438px;height:1px;background:#d4d4d4"></div>
<div style="position:absolute;left:27px;top:327px;width:1438px;height:1px;background:#d4d4d4"></div>
<div style="position:absolute;left:27px;top:347px;width:1438px;height:1px;background:#d4d4d4"></div>
<div style="position:absolute;left:27px;top:367px;width:1438px;height:1px;background:#d4d4d4"></div>
<div style="position:absolute;left:27px;top:387px;width:1438px;height:1px;background:#d4d4d4"></div>
<div style="position:absolute;left:27px;top:407px;width:1438px;height:1px;background:#d4d4d4"></div>
<div style="position:absolute;left:136px;top:208px;width:1px;height:19px;background:#b1b1b1"></div>
<div style="position:absolute;left:224px;top:208px;width:1px;height:19px;background:#b1b1b1"></div>
<div style="position:absolute;left:251px;top:208px;width:1px;height:19px;background:#b1b1b1"></div>
<div style="position:absolute;left:335px;top:208px;width:1px;height:19px;background:#b1b1b1"></div>
<div style="position:absolute;left:408px;top:208px;width:1px;height:19px;background:#b1b1b1"></div>
<div style="position:absolute;left:465px;top:208px;width:1px;height:19px;background:#b1b1b1"></div>
<div style="position:absolute;left:495px;top:208px;width:1px;height:19px;background:#b1b1b1"></div>
<div style="position:absolute;left:528px;top:208px;width:1px;height:19px;background:#b1b1b1"></div>
<div style="position:absolute;left:556px;top:208px;width:1px;height:19px;background:#b1b1b1"></div>
<div style="position:absolute;left:624px;top:208px;width:1px;height:19px;background:#b1b1b1"></div>
<div style="position:absolute;left:672px;top:208px;width:1px;height:19px;background:#b1b1b1"></div>
<div style="position:absolute;left:808px;top:208px;width:1px;height:19px;background:#b1b1b1"></div>
<div style="position:absolute;left:940px;top:208px;width:1px;height:19px;background:#b1b1b1"></div>
<div style="position:absolute;left:1120px;top:208px;width:1px;height:19px;background:#b1b1b1"></div>
<div style="position:absolute;left:1309px;top:208px;width:1px;height:19px;background:#b1b1b1"></div>
<div style="position:absolute;left:26px;top:208px;width:1px;height:200px;background:#9f9f9f"></div>
<div style="position:absolute;left:0px;top:227px;width:1465px;height:1px;background:#9f9f9f"></div>
<div style="position:absolute;left:1px;top:208px;width:1465px;height:0px;"></div>
<svg style="position:absolute;left:10px;top:211px;" width="14" height="14" viewBox="0 0 14 14"><path d="M1 12 H13 V1 Z" fill="#b4b4b4"/></svg>
<div style="position:absolute;left:1px;top:247px;width:25px;height:1px;background:#bdbdbd"></div>
<div style="position:absolute;left:1px;top:267px;width:25px;height:1px;background:#bdbdbd"></div>
<div style="position:absolute;left:1px;top:287px;width:25px;height:1px;background:#bdbdbd"></div>
<div style="position:absolute;left:1px;top:307px;width:25px;height:1px;background:#bdbdbd"></div>
<div style="position:absolute;left:1px;top:327px;width:25px;height:1px;background:#bdbdbd"></div>
<div style="position:absolute;left:1px;top:347px;width:25px;height:1px;background:#bdbdbd"></div>
<div style="position:absolute;left:1px;top:367px;width:25px;height:1px;background:#bdbdbd"></div>
<div style="position:absolute;left:1px;top:387px;width:25px;height:1px;background:#bdbdbd"></div>
<span class="t" style="left:77.00px;top:210.61px;font-size:13.4px;line-height:13.4px;font-weight:normal;font-style:normal;color:#262626;">A</span>
<span class="t" style="left:176.00px;top:210.61px;font-size:13.4px;line-height:13.4px;font-weight:normal;font-style:normal;color:#262626;">B</span>
<span class="t" style="left:233.00px;top:210.61px;font-size:13.4px;line-height:13.4px;font-weight:normal;font-style:normal;color:#262626;">C</span>
<span class="t" style="left:288.50px;top:210.61px;font-size:13.4px;line-height:13.4px;font-weight:normal;font-style:normal;color:#262626;">D</span>
<span class="t" style="left:367.50px;top:210.61px;font-size:13.4px;line-height:13.4px;font-weight:normal;font-style:normal;color:#262626;">E</span>
<span class="t" style="left:433.00px;top:210.61px;font-size:13.4px;line-height:13.4px;font-weight:normal;font-style:normal;color:#262626;">F</span>
<span class="t" style="left:475.50px;top:210.61px;font-size:13.4px;line-height:13.4px;font-weight:normal;font-style:normal;color:#262626;">G</span>
<span class="t" style="left:507.00px;top:210.61px;font-size:13.4px;line-height:13.4px;font-weight:normal;font-style:normal;color:#262626;">H</span>
<span class="t" style="left:540.50px;top:210.61px;font-size:13.4px;line-height:13.4px;font-weight:normal;font-style:normal;color:#262626;">I</span>
<span class="t" style="left:587.00px;top:210.61px;font-size:13.4px;line-height:13.4px;font-weight:normal;font-style:normal;color:#262626;">J</span>
<span class="t" style="left:644.00px;top:210.61px;font-size:13.4px;line-height:13.4px;font-weight:normal;font-style:normal;color:#262626;">K</span>
<span class="t" style="left:737.00px;top:210.61px;font-size:13.4px;line-height:13.4px;font-weight:normal;font-style:normal;color:#262626;">L</span>
<span class="t" style="left:869.00px;top:210.61px;font-size:13.4px;line-height:13.4px;font-weight:normal;font-style:normal;color:#262626;">M</span>
<span class="t" style="left:1025.50px;top:210.61px;font-size:13.4px;line-height:13.4px;font-weight:normal;font-style:normal;color:#1d3b2a;">N</span>
<span class="t" style="left:1210.00px;top:210.61px;font-size:13.4px;line-height:13.4px;font-weight:normal;font-style:normal;color:#262626;">O</span>
<span class="t" style="left:1392.50px;top:210.61px;font-size:13.4px;line-height:13.4px;font-weight:normal;font-style:normal;color:#262626;">P</span>
<span class="t" style="left:10.00px;top:231.61px;font-size:13.4px;line-height:13.4px;font-weight:normal;font-style:normal;color:#262626;">1</span>
<span class="t" style="left:10.00px;top:251.61px;font-size:13.4px;line-height:13.4px;font-weight:normal;font-style:normal;color:#262626;">2</span>
<span class="t" style="left:10.00px;top:271.61px;font-size:13.4px;line-height:13.4px;font-weight:normal;font-style:normal;color:#262626;">3</span>
<span class="t" style="left:10.00px;top:291.61px;font-size:13.4px;line-height:13.4px;font-weight:normal;font-style:normal;color:#262626;">4</span>
<span class="t" style="left:10.00px;top:311.61px;font-size:13.4px;line-height:13.4px;font-weight:normal;font-style:normal;color:#262626;">5</span>
<span class="t" style="left:10.00px;top:331.61px;font-size:13.4px;line-height:13.4px;font-weight:normal;font-style:normal;color:#262626;">6</span>
<span class="t" style="left:10.00px;top:351.61px;font-size:13.4px;line-height:13.4px;font-weight:normal;font-style:normal;color:#262626;">7</span>
<span class="t" style="left:10.00px;top:371.61px;font-size:13.4px;line-height:13.4px;font-weight:normal;font-style:normal;color:#262626;">8</span>
<span class="t" style="left:10.00px;top:391.61px;font-size:13.4px;line-height:13.4px;font-weight:normal;font-style:normal;color:#262626;">9</span>
<span class="t" style="left:29.30px;top:231.61px;font-size:13.4px;line-height:13.4px;font-weight:normal;font-style:normal;color:#000000;transform:scaleX(0.8929);">3RDPARTY</span>
<span class="t" style="left:29.30px;top:251.61px;font-size:13.4px;line-height:13.4px;font-weight:normal;font-style:normal;color:#000000;">Company Name</span>
<span class="t" style="left:139.20px;top:251.61px;font-size:13.4px;line-height:13.4px;font-weight:normal;font-style:normal;color:#000000;transform:scaleX(1.0139);">Customer No</span>
<div style="position:absolute;left:225px;top:248px;width:26px;height:19px;overflow:hidden">
<span class="t" style="left:2.30px;top:3.61px;font-size:13.4px;line-height:13.4px;font-weight:normal;font-style:normal;color:#000000;">Invoice No</span>
</div>
<span class="t" style="left:254.60px;top:251.61px;font-size:13.4px;line-height:13.4px;font-weight:normal;font-style:normal;color:#000000;transform:scaleX(1.0189);">Invoice Date</span>
<span class="t" style="left:338.70px;top:251.61px;font-size:13.4px;line-height:13.4px;font-weight:normal;font-style:normal;color:#000000;transform:scaleX(1.0129);">Item Code</span>
<span class="t" style="left:411.00px;top:251.61px;font-size:13.4px;line-height:13.4px;font-weight:normal;font-style:normal;color:#000000;transform:scaleX(1.0804);">Amount</span>
<div style="position:absolute;left:466px;top:248px;width:29px;height:19px;overflow:hidden">
<span class="t" style="left:2.30px;top:3.61px;font-size:13.4px;line-height:13.4px;font-weight:normal;font-style:normal;color:#000000;">Sales Tax</span>
</div>
<div style="position:absolute;left:496px;top:248px;width:32px;height:19px;overflow:hidden">
<span class="t" style="left:2.30px;top:3.61px;font-size:13.4px;line-height:13.4px;font-weight:normal;font-style:normal;color:#000000;">Warehouse</span>
</div>
<div style="position:absolute;left:529px;top:248px;width:27px;height:19px;overflow:hidden">
<span class="t" style="left:2.30px;top:3.61px;font-size:13.4px;line-height:13.4px;font-weight:normal;font-style:normal;color:#000000;">Transaction</span>
</div>
<span class="t" style="left:559.20px;top:251.61px;font-size:13.4px;line-height:13.4px;font-weight:normal;font-style:normal;color:#000000;transform:scaleX(1.0107);">Date</span>
<span class="t" style="left:627.30px;top:251.61px;font-size:13.4px;line-height:13.4px;font-weight:normal;font-style:normal;color:#000000;transform:scaleX(1.0892);">ItemId</span>
<span class="t" style="left:675.30px;top:251.61px;font-size:13.4px;line-height:13.4px;font-weight:normal;font-style:normal;color:#000000;transform:scaleX(1.0185);">Customer Reference</span>
<span class="t" style="left:811.10px;top:251.61px;font-size:13.4px;line-height:13.4px;font-weight:normal;font-style:normal;color:#000000;transform:scaleX(1.0470);">3rd Vendor Number</span>
<span class="t" style="left:943.10px;top:251.61px;font-size:13.4px;line-height:13.4px;font-weight:normal;font-style:normal;color:#000000;transform:scaleX(1.0287);">Third Party Invoice Number</span>
<span class="t" style="left:1123.40px;top:251.61px;font-size:13.4px;line-height:13.4px;font-weight:normal;font-style:normal;color:#000000;transform:scaleX(1.0308);">Third Party Payment Amount</span>
<div style="position:absolute;left:1310px;top:248px;width:155px;height:19px;overflow:hidden">
<span class="t" style="left:2.30px;top:3.61px;font-size:13.4px;line-height:13.4px;font-weight:normal;font-style:normal;color:#000000;transform:scaleX(1.0300);">Third Party Purchase Order</span>
</div>
<span class="t" style="left:29.30px;top:271.61px;font-size:13.4px;line-height:13.4px;font-weight:normal;font-style:normal;color:#000000;transform:scaleX(0.9900);">Jones</span>
<span class="t" style="left:186.59px;top:271.61px;font-size:13.4px;line-height:13.4px;font-weight:normal;font-style:normal;color:#000000;transform:scaleX(0.9300);">12443</span>
<span class="t" style="left:279.16px;top:271.61px;font-size:13.4px;line-height:13.4px;font-weight:normal;font-style:normal;color:#000000;transform:scaleX(1.0200);">9/8/2022</span>
<span class="t" style="left:338.70px;top:271.61px;font-size:13.4px;line-height:13.4px;font-weight:normal;font-style:normal;color:#000000;transform:scaleX(0.8770);">3RD PARTY</span>
<span class="t" style="left:424.37px;top:271.61px;font-size:13.4px;line-height:13.4px;font-weight:normal;font-style:normal;color:#000000;transform:scaleX(0.9300);">863.54</span>
<span class="t" style="left:567.94px;top:271.61px;font-size:13.4px;line-height:13.4px;font-weight:normal;font-style:normal;color:#000000;transform:scaleX(1.0300);">6/8/2022</span>
<span class="t" style="left:649.00px;top:271.61px;font-size:13.4px;line-height:13.4px;font-weight:normal;font-style:normal;color:#000000;transform:scaleX(0.9455);">120</span>
<span class="t" style="left:675.30px;top:271.61px;font-size:13.4px;line-height:13.4px;font-weight:normal;font-style:normal;color:#000000;transform:scaleX(0.9493);">HD-1234-22</span>
<span class="t" style="left:905.05px;top:271.61px;font-size:13.4px;line-height:13.4px;font-weight:normal;font-style:normal;color:#000000;transform:scaleX(0.9300);">11198</span>
<span class="t" style="left:1055.09px;top:271.61px;font-size:13.4px;line-height:13.4px;font-weight:normal;font-style:normal;color:#000000;transform:scaleX(0.9300);">123456789</span>
<span class="t" style="left:1268.37px;top:271.61px;font-size:13.4px;line-height:13.4px;font-weight:normal;font-style:normal;color:#000000;transform:scaleX(0.9300);">647.66</span>
<div style="position:absolute;left:1310px;top:268px;width:155px;height:19px;overflow:hidden">
<span class="t" style="left:111.30px;top:3.61px;font-size:13.4px;line-height:13.4px;font-weight:normal;font-style:normal;color:#000000;transform:scaleX(0.9300);">33-23921</span>
</div>
<span class="t" style="left:29.30px;top:291.61px;font-size:13.4px;line-height:13.4px;font-weight:normal;font-style:normal;color:#000000;transform:scaleX(0.9900);">Jones</span>
<span class="t" style="left:186.59px;top:291.61px;font-size:13.4px;line-height:13.4px;font-weight:normal;font-style:normal;color:#000000;transform:scaleX(0.9300);">12443</span>
<span class="t" style="left:279.16px;top:291.61px;font-size:13.4px;line-height:13.4px;font-weight:normal;font-style:normal;color:#000000;transform:scaleX(1.0200);">9/8/2022</span>
<span class="t" style="left:338.70px;top:291.61px;font-size:13.4px;line-height:13.4px;font-weight:normal;font-style:normal;color:#000000;transform:scaleX(0.8770);">3RD PARTY</span>
<span class="t" style="left:424.37px;top:291.61px;font-size:13.4px;line-height:13.4px;font-weight:normal;font-style:normal;color:#000000;transform:scaleX(0.9300);">257.88</span>
<span class="t" style="left:567.94px;top:291.61px;font-size:13.4px;line-height:13.4px;font-weight:normal;font-style:normal;color:#000000;transform:scaleX(1.0300);">6/8/2022</span>
<span class="t" style="left:649.00px;top:291.61px;font-size:13.4px;line-height:13.4px;font-weight:normal;font-style:normal;color:#000000;transform:scaleX(0.9455);">120</span>
<span class="t" style="left:675.30px;top:291.61px;font-size:13.4px;line-height:13.4px;font-weight:normal;font-style:normal;color:#000000;transform:scaleX(0.9493);">HD-1234-22</span>
<span class="t" style="left:903.19px;top:291.61px;font-size:13.4px;line-height:13.4px;font-weight:normal;font-style:normal;color:#000000;transform:scaleX(0.9300);">12994</span>
<span class="t" style="left:1055.09px;top:291.61px;font-size:13.4px;line-height:13.4px;font-weight:normal;font-style:normal;color:#000000;transform:scaleX(0.9300);">987654321</span>
<span class="t" style="left:1268.37px;top:291.61px;font-size:13.4px;line-height:13.4px;font-weight:normal;font-style:normal;color:#000000;transform:scaleX(0.9300);">193.41</span>
<div style="position:absolute;left:1310px;top:288px;width:155px;height:19px;overflow:hidden">
<span class="t" style="left:111.30px;top:3.61px;font-size:13.4px;line-height:13.4px;font-weight:normal;font-style:normal;color:#000000;transform:scaleX(0.9300);">33-23922</span>
</div>
<span class="t" style="left:29.30px;top:311.61px;font-size:13.4px;line-height:13.4px;font-weight:normal;font-style:normal;color:#000000;transform:scaleX(0.9900);">Jackson</span>
<span class="t" style="left:186.59px;top:311.61px;font-size:13.4px;line-height:13.4px;font-weight:normal;font-style:normal;color:#000000;transform:scaleX(0.9300);">12658</span>
<span class="t" style="left:271.00px;top:311.61px;font-size:13.4px;line-height:13.4px;font-weight:normal;font-style:normal;color:#000000;transform:scaleX(1.0200);">9/27/2022</span>
<span class="t" style="left:338.70px;top:311.61px;font-size:13.4px;line-height:13.4px;font-weight:normal;font-style:normal;color:#000000;transform:scaleX(0.8770);">3RD PARTY</span>
<span class="t" style="left:430.88px;top:311.61px;font-size:13.4px;line-height:13.4px;font-weight:normal;font-style:normal;color:#000000;transform:scaleX(0.9300);">280.5</span>
<span class="t" style="left:559.70px;top:311.61px;font-size:13.4px;line-height:13.4px;font-weight:normal;font-style:normal;color:#000000;transform:scaleX(1.0300);">5/27/2022</span>
<span class="t" style="left:649.00px;top:311.61px;font-size:13.4px;line-height:13.4px;font-weight:normal;font-style:normal;color:#000000;transform:scaleX(0.9455);">120</span>
<span class="t" style="left:675.30px;top:311.61px;font-size:13.4px;line-height:13.4px;font-weight:normal;font-style:normal;color:#000000;transform:scaleX(0.9493);">HD-3003-22</span>
<span class="t" style="left:903.19px;top:311.61px;font-size:13.4px;line-height:13.4px;font-weight:normal;font-style:normal;color:#000000;transform:scaleX(0.9300);">10464</span>
<span class="t" style="left:1082.99px;top:311.61px;font-size:13.4px;line-height:13.4px;font-weight:normal;font-style:normal;color:#000000;transform:scaleX(0.9300);">67686</span>
<span class="t" style="left:1274.88px;top:311.61px;font-size:13.4px;line-height:13.4px;font-weight:normal;font-style:normal;color:#000000;transform:scaleX(0.9300);">230.5</span>
<div style="position:absolute;left:1310px;top:308px;width:155px;height:19px;overflow:hidden">
<span class="t" style="left:117.70px;top:3.61px;font-size:13.4px;line-height:13.4px;font-weight:normal;font-style:normal;color:#000000;transform:scaleX(0.9300);">88-00911</span>
</div>
<span class="t" style="left:29.30px;top:331.61px;font-size:13.4px;line-height:13.4px;font-weight:normal;font-style:normal;color:#000000;transform:scaleX(0.9900);">Cooper</span>
<span class="t" style="left:186.59px;top:331.61px;font-size:13.4px;line-height:13.4px;font-weight:normal;font-style:normal;color:#000000;transform:scaleX(0.9300);">10095</span>
<span class="t" style="left:279.16px;top:331.61px;font-size:13.4px;line-height:13.4px;font-weight:normal;font-style:normal;color:#000000;transform:scaleX(1.0200);">9/8/2022</span>
<span class="t" style="left:338.70px;top:331.61px;font-size:13.4px;line-height:13.4px;font-weight:normal;font-style:normal;color:#000000;transform:scaleX(0.8770);">3RD PARTY</span>
<span class="t" style="left:455.99px;top:331.61px;font-size:13.4px;line-height:13.4px;font-weight:normal;font-style:normal;color:#000000;transform:scaleX(0.9300);">0</span>
<span class="t" style="left:567.94px;top:331.61px;font-size:13.4px;line-height:13.4px;font-weight:normal;font-style:normal;color:#000000;transform:scaleX(1.0300);">6/8/2022</span>
<span class="t" style="left:649.00px;top:331.61px;font-size:13.4px;line-height:13.4px;font-weight:normal;font-style:normal;color:#000000;transform:scaleX(0.9455);">120</span>
<span class="t" style="left:675.30px;top:331.61px;font-size:13.4px;line-height:13.4px;font-weight:normal;font-style:normal;color:#000000;transform:scaleX(0.9493);">HD-3004-22</span>
<span class="t" style="left:904.12px;top:331.61px;font-size:13.4px;line-height:13.4px;font-weight:normal;font-style:normal;color:#000000;transform:scaleX(0.9300);">11470</span>
<span class="t" style="left:1059.74px;top:331.61px;font-size:13.4px;line-height:13.4px;font-weight:normal;font-style:normal;color:#000000;transform:scaleX(0.9300);">H45908-O</span>
<span class="t" style="left:1274.88px;top:331.61px;font-size:13.4px;line-height:13.4px;font-weight:normal;font-style:normal;color:#000000;transform:scaleX(0.9300);">676.6</span>
<div style="position:absolute;left:1310px;top:328px;width:155px;height:19px;overflow:hidden">
<span class="t" style="left:110.60px;top:3.61px;font-size:13.4px;line-height:13.4px;font-weight:normal;font-style:normal;color:#000000;transform:scaleX(0.9300);">55-00921</span>
</div>
<div style="position:absolute;left:1465px;top:208px;width:21px;height:200px;background:#e6e6e6"></div>
<div style="position:absolute;left:1468px;top:225px;width:15px;height:169px;background:#dadada"></div>
<div style="position:absolute;left:1468px;top:210px;width:15px;height:15px;background:#fff;border:1px solid #9f9f9f;box-sizing:border-box"></div>
<svg style="position:absolute;left:1471px;top:214px;" width="9" height="6" viewBox="0 0 9 6"><path d="M0.5 5 H8.5 L4.5 0.5 Z" fill="#6e6e6e"/></svg>
<div style="position:absolute;left:1468px;top:225px;width:15px;height:76px;background:#fff;border:1px solid #9f9f9f;box-sizing:border-box"></div>
<div style="position:absolute;left:1468px;top:394px;width:15px;height:15px;background:#fff;border:1px solid #9f9f9f;box-sizing:border-box"></div>
<svg style="position:absolute;left:1471px;top:399px;" width="9" height="6" viewBox="0 0 9 6"><path d="M0.5 0.5 H8.5 L4.5 5 Z" fill="#6e6e6e"/></svg>
<div style="position:absolute;left:1465px;top:227px;width:1px;height:181px;background:#a6a6a6"></div>
<div style="position:absolute;left:1px;top:408px;width:1485px;height:28px;background:#e6e6e6"></div>
<div style="position:absolute;left:1px;top:408px;width:1465px;height:1px;background:#9f9f9f"></div>
<svg style="position:absolute;left:27px;top:417px;" width="7" height="10" viewBox="0 0 7 10"><path d="M5.5 0.5 V8.5 L0.8 4.5 Z" fill="#c6c6c6"/></svg>
<svg style="position:absolute;left:56px;top:417px;" width="7" height="10" viewBox="0 0 7 10"><path d="M0.5 0.5 V8.5 L5.2 4.5 Z" fill="#a6a6a6"/></svg>
<div style="position:absolute;left:101px;top:408px;width:165px;height:25px;background:#fff"></div>
<div style="position:absolute;left:101px;top:430px;width:165px;height:2px;background:#217346"></div>
<div style="position:absolute;left:101px;top:408px;width:1px;height:23px;background:#a0a0a0"></div>
<div style="position:absolute;left:265px;top:408px;width:1px;height:23px;background:#c8c8c8"></div>
<span class="t" style="left:113.20px;top:415.38px;font-size:12.5px;line-height:12.5px;font-weight:bold;font-style:normal;color:#1e6b41;transform:scaleX(1.0594);">Third Party Import File</span>
<svg style="position:absolute;left:297px;top:413px;" width="19" height="19" viewBox="0 0 19 19"><circle cx="9.5" cy="9.5" r="8" fill="none" stroke="#8a8886" stroke-width="1.2"/><path d="M9.5 5 V14 M5 9.5 H14" stroke="#605e5c" stroke-width="1.3"/></svg>
<div style="position:absolute;left:892px;top:417px;width:2px;height:2px;background:#a6a6a6"></div>
<div style="position:absolute;left:892px;top:421px;width:2px;height:2px;background:#a6a6a6"></div>
<div style="position:absolute;left:892px;top:425px;width:2px;height:2px;background:#a6a6a6"></div>
<div style="position:absolute;left:909px;top:415px;width:556px;height:15px;background:#dadada"></div>
<div style="position:absolute;left:909px;top:415px;width:15px;height:15px;background:#fff;border:1px solid #777;box-sizing:border-box"></div>
<svg style="position:absolute;left:912px;top:418px;" width="9" height="9" viewBox="0 0 9 9"><path d="M6.5 0.5 V8.5 L2 4.5 Z" fill="#606060"/></svg>
<div style="position:absolute;left:923px;top:415px;width:416px;height:15px;background:#fff;border:1px solid #777;border-left-width:2px;box-sizing:border-box"></div>
<div style="position:absolute;left:1450px;top:415px;width:15px;height:15px;background:#fff;border:1px solid #777;box-sizing:border-box"></div>
<svg style="position:absolute;left:1454px;top:418px;" width="9" height="9" viewBox="0 0 9 9"><path d="M2.5 0.5 V8.5 L7 4.5 Z" fill="#606060"/></svg>
<div style="position:absolute;left:1px;top:436px;width:1485px;height:1px;background:#d6d6d6"></div>
<div style="position:absolute;left:1px;top:437px;width:1485px;height:21px;background:#f3f2f1"></div>
<span class="t" style="left:8.40px;top:443.48px;font-size:11.2px;line-height:11.2px;font-weight:normal;font-style:normal;color:#444342;transform:scaleX(0.9212);">Ready</span>
<span class="t" style="left:55.50px;top:443.48px;font-size:11.2px;line-height:11.2px;font-weight:normal;font-style:normal;color:#444342;transform:scaleX(0.9933);">Flash Fill Changed Cells: 3</span>
<svg style="position:absolute;left:208px;top:440px;" width="17" height="16" viewBox="0 0 17 16"><path d="M8 12.5 H1.5 V1.5 H14.5 V6" fill="none" stroke="#3b3a39" stroke-width="1.1"/><path d="M1.5 3.5 H14.5" stroke="#3b3a39" stroke-width="1.1"/><path d="M3 7 H5 M3 9.5 H5" stroke="#3b3a39" stroke-width="1"/><circle cx="10.2" cy="9.4" r="4.4" fill="#f3f2f1" stroke="#3b3a39" stroke-width="1.1"/><circle cx="10.2" cy="9.4" r="1.7" fill="#3b3a39"/></svg>
<svg style="position:absolute;left:240px;top:439px;" width="17" height="17" viewBox="0 0 17 17"><circle cx="7" cy="2.8" r="1.9" fill="none" stroke="#3b3a39" stroke-width="1"/><path d="M1.5 4.5 Q2 6.5 5 6.8 Q5.5 9 4.8 11 Q3.5 13.5 3.5 14.5 Q4 15 5.5 14.5 L7.5 10 M12.5 4.5 Q12 6.5 9 6.8 Q8.5 8 8.8 9.5" fill="none" stroke="#3b3a39" stroke-width="1.1"/><path d="M7.4 11.5 L10.4 14.6 L15.5 9.4" fill="none" stroke="#3b3a39" stroke-width="1.1"/></svg>
<span class="t" style="left:258.50px;top:443.48px;font-size:11.2px;line-height:11.2px;font-weight:normal;font-style:normal;color:#444342;transform:scaleX(1.0328);">Accessibility: Good to go</span>
<svg style="position:absolute;left:1056px;top:440px;" width="17" height="16" viewBox="0 0 17 16"><path d="M6.5 9.5 H1.5 V1.5 H14.5 V6" fill="none" stroke="#3b3a39" stroke-width="1.1"/><polygon points="14.70,9.50 13.01,10.95 12.60,13.14 10.50,12.40 8.40,13.14 7.99,10.95 6.30,9.50 7.99,8.05 8.40,5.86 10.50,6.60 12.60,5.86 13.01,8.05" fill="#f3f2f1" stroke="#3b3a39" stroke-width="1" stroke-linejoin="round"/><circle cx="10.5" cy="9.5" r="1" fill="#3b3a39"/></svg>
<span class="t" style="left:1074.60px;top:443.48px;font-size:11.2px;line-height:11.2px;font-weight:normal;font-style:normal;color:#444342;">Display Settings</span>
<div style="position:absolute;left:1175px;top:437px;width:40px;height:21px;background:#d2d0ce"></div>
<svg style="position:absolute;left:1188px;top:440px;" width="14" height="14" viewBox="0 0 14 14"><path d="M0.7 0.7 H12.3 V12.3 H0.7 Z M0.7 4.6 H12.3 M0.7 8.4 H12.3 M4.6 0.7 V12.3 M8.4 0.7 V12.3" fill="none" stroke="#3b3a39" stroke-width="1.4"/></svg>
<svg style="position:absolute;left:1228px;top:440px;" width="15" height="14" viewBox="0 0 15 14"><rect x="0.7" y="0.7" width="12.6" height="12" fill="none" stroke="#3b3a39" stroke-width="1.3"/><rect x="3.5" y="2.5" width="7.2" height="8.3" fill="none" stroke="#3b3a39" stroke-width="1.2"/><path d="M5.2 4.4 H9 M5.2 6.6 H9 M5.2 8.8 H9" stroke="#3b3a39" stroke-width="0.9"/></svg>
<svg style="position:absolute;left:1268px;top:440px;" width="15" height="14" viewBox="0 0 15 14"><rect x="0.7" y="0.7" width="13" height="12" fill="none" stroke="#3b3a39" stroke-width="1.3"/><path d="M0.7 7.6 H9.3 V0.7 M5.2 0.7 V7.6" fill="none" stroke="#3b3a39" stroke-width="1.2"/><path d="M2.2 1.4 V7 M3.7 1.4 V7 M6.6 1.4 V7 M8 1.4 V7" stroke="#8a8886" stroke-width="0.5"/></svg>
<div style="position:absolute;left:1301px;top:447px;width:7px;height:1px;background:#3b3a39"></div>
<div style="position:absolute;left:1314px;top:447px;width:100px;height:1px;background:#3b3a39"></div>
<div style="position:absolute;left:1362px;top:442px;width:5px;height:11px;background:#3b3a39"></div>
<div style="position:absolute;left:1419px;top:447px;width:8px;height:1px;background:#3b3a39"></div>
<div style="position:absolute;left:1422px;top:443px;width:1px;height:8px;background:#3b3a39"></div>
<span class="t" style="left:1440.70px;top:443.48px;font-size:11.2px;line-height:11.2px;font-weight:normal;font-style:normal;color:#5a5856;transform:scaleX(0.9000);">100%</span>
<div style="position:absolute;left:0px;top:35px;width:1px;height:424px;background:#217346"></div>
<div style="position:absolute;left:1486px;top:35px;width:1px;height:424px;background:#217346"></div>
<div style="position:absolute;left:0px;top:458px;width:1487px;height:1px;background:#217346"></div>
</body></html>
